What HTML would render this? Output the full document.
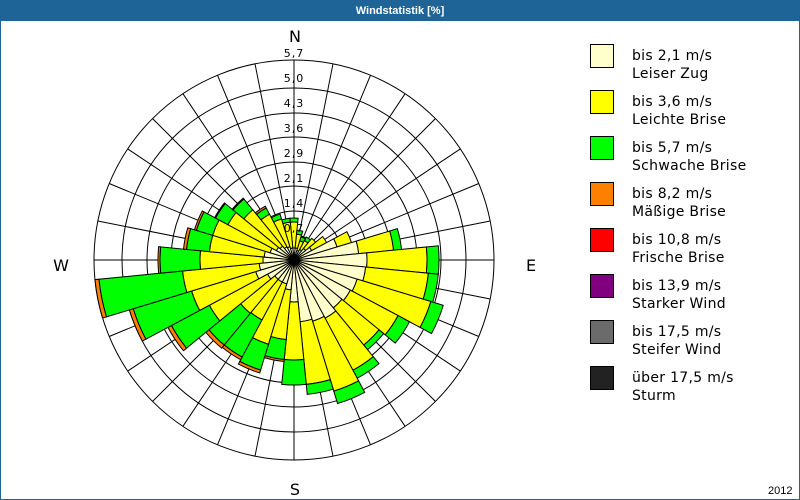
<!DOCTYPE html>
<html><head><meta charset="utf-8"><style>
html,body{margin:0;padding:0;background:#fff}
#f{position:relative;width:798px;height:498px;border:1px solid #1f6496;overflow:hidden;font-family:"Liberation Sans",sans-serif}
#t{position:absolute;left:0;top:0;width:798px;height:20px;background:#1f6496;color:#fff;font-weight:bold;font-size:11px;text-align:center;line-height:20px}
.sq{position:absolute;left:589px;width:22px;height:22px;border:1px solid #000}
.lt{position:absolute;left:631px;font-family:"DejaVu Sans",sans-serif;font-size:14px;line-height:18px;color:#000;letter-spacing:0.3px}
</style></head><body><div id="f">
<div id="t">Windstatistik [%]</div>
<svg id="s" width="800" height="500" style="position:absolute;left:-1px;top:-1px"></svg>
<div class="sq" style="top:43px;background:#ffffcc"></div><div class="lt" style="top:46px">bis 2,1 m/s<br>Leiser Zug</div>
<div class="sq" style="top:89px;background:#ffff00"></div><div class="lt" style="top:92px">bis 3,6 m/s<br>Leichte Brise</div>
<div class="sq" style="top:135px;background:#00ff00"></div><div class="lt" style="top:138px">bis 5,7 m/s<br>Schwache Brise</div>
<div class="sq" style="top:181px;background:#ff8000"></div><div class="lt" style="top:184px">bis 8,2 m/s<br>Mäßige Brise</div>
<div class="sq" style="top:227px;background:#ff0000"></div><div class="lt" style="top:230px">bis 10,8 m/s<br>Frische Brise</div>
<div class="sq" style="top:273px;background:#800080"></div><div class="lt" style="top:276px">bis 13,9 m/s<br>Starker Wind</div>
<div class="sq" style="top:319px;background:#6b6b6b"></div><div class="lt" style="top:322px">bis 17,5 m/s<br>Steifer Wind</div>
<div class="sq" style="top:365px;background:#222"></div><div class="lt" style="top:368px">über 17,5 m/s<br>Sturm</div>
<div style="position:absolute;left:767px;top:484px;font-size:11px">2012</div>
</div>
<script>
var s=document.getElementById('s'),cx=294,cy=260,h='';
var R=[25,49,74,98,123,147,172,200];
for(var k=0;k<R.length;k++)h+='<circle cx="'+cx+'" cy="'+cy+'" r="'+R[k]+'" fill="none" stroke="#000" stroke-width="1"/>';
for(var i=0;i<32;i++){var a=i*11.25*Math.PI/180;h+='<line x1="'+cx+'" y1="'+cy+'" x2="'+(cx+200*Math.sin(a)).toFixed(1)+'" y2="'+(cy-200*Math.cos(a)).toFixed(1)+'" stroke="#000"/>';}
var D=[[12,38,42],[12,26,30],[10,20,24],[12,22,26],[15,28,28],[20,37,37],[45,60,60],[65,100,108],[73,133,145],[72,135,145],[66,143,156],[64,118,131],[62,110,116],[66,125,134],[64,137,150],[62,125,135],[42,100,125],[30,80,100,102],[25,88,115,118],[25,68,110,113],[25,69,110,114],[30,96,139,143],[40,107,168,172],[35,112,196,200],[31,94,134,136],[30,85,108,111],[25,85,102,104],[20,75,89,90],[18,65,79,80],[15,52,59,61],[14,43,48],[12,38,42]];
var C=['#ffffcc','#ffff00','#00ff00','#ff8000'];
function P(r,a){a=a*Math.PI/180;return (cx+r*Math.sin(a)).toFixed(2)+','+(cy-r*Math.cos(a)).toFixed(2);}
for(var i=0;i<32;i++){var b=i*11.25,a0=b-5.625,a1=b+5.625,d=D[i],p=0;
for(var j=0;j<d.length;j++){var r=d[j];if(r<=p)continue;
var path='M'+P(p,a0)+' L'+P(r,a0)+' A'+r+','+r+' 0 0 1 '+P(r,a1)+' L'+P(p,a1)+(p>0?' A'+p+','+p+' 0 0 0 '+P(p,a0):'')+'Z';
h+='<path d="'+path+'" fill="'+C[j]+'" stroke="#000" stroke-width="1"/>';p=r;}}
var L=['5,7','5,0','4,3','3,6','2,9','2,1','1,4','0,7'],Y=[57,82,107,132,157,182,207,232];
for(var k=0;k<8;k++)h+='<text x="'+cx+'" y="'+Y[k]+'" font-size="11" text-anchor="middle" font-family="DejaVu Sans,sans-serif" letter-spacing="1">'+L[k]+'</text>';
var F='font-family="DejaVu Sans,sans-serif" font-size="16" text-anchor="middle"';
h+='<text x="295" y="42" '+F+'>N</text><text x="61" y="271" '+F+'>W</text><text x="531" y="271" '+F+'>E</text><text x="295" y="495" '+F+'>S</text>';
s.innerHTML=h;
</script>
</body></html>
